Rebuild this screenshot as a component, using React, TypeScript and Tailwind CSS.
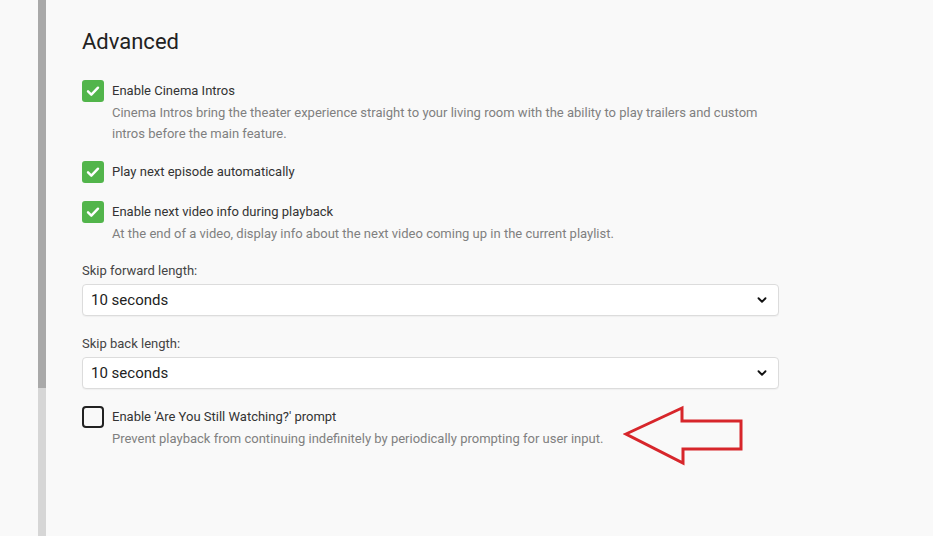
import { ChevronDown } from 'lucide-react';

function CheckBox({ checked }: { checked: boolean }) {
  if (checked) {
    return (
      <div className="w-[22px] h-[22px] shrink-0 rounded-[3px] bg-[#52b54b] flex items-center justify-center">
        <svg width="16" height="16" viewBox="0 0 24 24" fill="none" stroke="white" strokeWidth="3.6" strokeLinecap="round" strokeLinejoin="round">
          <path d="M4.5 12.5l5 5L19.5 7" />
        </svg>
      </div>
    );
  }
  return <div className="w-[22px] h-[22px] shrink-0 rounded-[4px] border-2 border-[#222]" />;
}

function CheckRow({ checked, label, desc }: { checked: boolean; label: string; desc?: string }) {
  return (
    <div className="flex gap-2">
      <CheckBox checked={checked} />
      <div className="flex-1 min-w-0">
        <div className="text-[13px] leading-[22px] text-[#333]">{label}</div>
        {desc && <div className="text-[13px] leading-[21px] text-[#808080] pr-[20px]">{desc}</div>}
      </div>
    </div>
  );
}

function SelectBox({ label, value }: { label: string; value: string }) {
  return (
    <div>
      <div className="text-[13px] leading-[20px] text-[#444] mb-[3px]">{label}</div>
      <div className="h-[32px] bg-white border border-[#dcdcdc] rounded-[4px] flex items-center justify-between pl-[8px] pr-[9px] shadow-[0_1px_1px_rgba(0,0,0,0.04)]">
        <span className="text-[15px] text-[#222]">{value}</span>
        <ChevronDown size={14} strokeWidth={3.2} className="text-[#111]" />
      </div>
    </div>
  );
}

function App() {
  return (
    <div className="h-[536px] w-[933px] overflow-hidden bg-[#f9f9f9] flex font-['Roboto',sans-serif]">
      {/* scrollbar */}
      <div className="w-[38px] shrink-0" />
      <div className="w-[8px] shrink-0 flex flex-col">
        <div className="h-[388px] bg-[#a9a9a9]" />
        <div className="flex-1 bg-[#d6d6d6]" />
      </div>

      <main className="pl-[36px] pt-[28px] w-[733px]">
        <h2 className="text-[22px] leading-[28px] text-[#222]">Advanced</h2>

        <div className="mt-[24px]">
          <CheckRow
            checked
            label="Enable Cinema Intros"
            desc="Cinema Intros bring the theater experience straight to your living room with the ability to play trailers and custom intros before the main feature."
          />
        </div>
        <div className="mt-[17px]">
          <CheckRow checked label="Play next episode automatically" />
        </div>
        <div className="mt-[18px]">
          <CheckRow
            checked
            label="Enable next video info during playback"
            desc="At the end of a video, display info about the next video coming up in the current playlist."
          />
        </div>

        <div className="mt-[17px]">
          <SelectBox label="Skip forward length:" value="10 seconds" />
        </div>
        <div className="mt-[18px]">
          <SelectBox label="Skip back length:" value="10 seconds" />
        </div>

        <div className="mt-[17px] relative">
          <CheckRow
            checked={false}
            label="Enable 'Are You Still Watching?' prompt"
            desc="Prevent playback from continuing indefinitely by periodically prompting for user input."
          />
          {/* annotation arrow */}
          <svg className="absolute left-[541px] top-[-2px]" width="124" height="62" viewBox="0 0 124 62">
            <path
              d="M3 30 L59 4 L59 17 L118 17 L118 45 L60 45 L60 59 Z"
              fill="none"
              stroke="#d7262b"
              strokeWidth="3"
              strokeLinejoin="miter"
            />
          </svg>
        </div>
      </main>
    </div>
  );
}

export default App;
